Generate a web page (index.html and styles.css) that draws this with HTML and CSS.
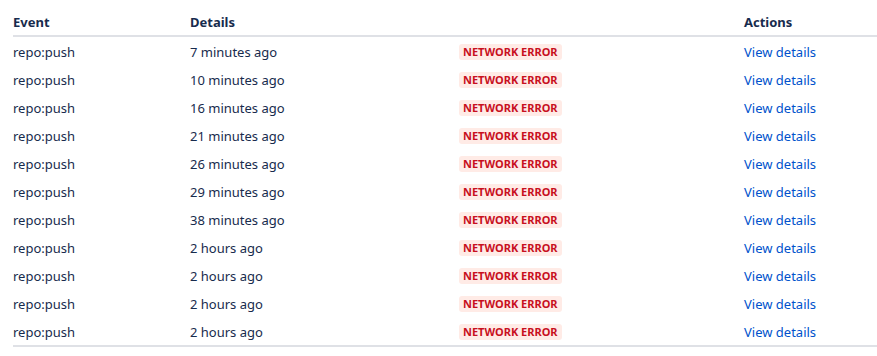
FILE: index.html
```html
<!DOCTYPE html>
<html>
<head>
    <title>Webhook requests</title>
    <link rel="stylesheet" href="styles.css">
</head>
<body>
    <table class="requests">
        <colgroup>
            <col class="col-event">
            <col class="col-details">
            <col class="col-status">
            <col class="col-actions">
        </colgroup>
        <thead>
            <tr>
                <th>Event</th>
                <th>Details</th>
                <th></th>
                <th>Actions</th>
            </tr>
        </thead>
        <tbody>
            <tr><td>repo:push</td><td>7 minutes ago</td><td><span class="lozenge">Network error</span></td><td><a href="#">View details</a></td></tr>
            <tr><td>repo:push</td><td>10 minutes ago</td><td><span class="lozenge">Network error</span></td><td><a href="#">View details</a></td></tr>
            <tr><td>repo:push</td><td>16 minutes ago</td><td><span class="lozenge">Network error</span></td><td><a href="#">View details</a></td></tr>
            <tr><td>repo:push</td><td>21 minutes ago</td><td><span class="lozenge">Network error</span></td><td><a href="#">View details</a></td></tr>
            <tr><td>repo:push</td><td>26 minutes ago</td><td><span class="lozenge">Network error</span></td><td><a href="#">View details</a></td></tr>
            <tr><td>repo:push</td><td>29 minutes ago</td><td><span class="lozenge">Network error</span></td><td><a href="#">View details</a></td></tr>
            <tr><td>repo:push</td><td>38 minutes ago</td><td><span class="lozenge">Network error</span></td><td><a href="#">View details</a></td></tr>
            <tr><td>repo:push</td><td>2 hours ago</td><td><span class="lozenge">Network error</span></td><td><a href="#">View details</a></td></tr>
            <tr><td>repo:push</td><td>2 hours ago</td><td><span class="lozenge">Network error</span></td><td><a href="#">View details</a></td></tr>
            <tr><td>repo:push</td><td>2 hours ago</td><td><span class="lozenge">Network error</span></td><td><a href="#">View details</a></td></tr>
            <tr><td>repo:push</td><td>2 hours ago</td><td><span class="lozenge">Network error</span></td><td><a href="#">View details</a></td></tr>
        </tbody>
    </table>
</body>
</html>
```

FILE: styles.css
```css
body {
    font-family: "Noto Sans", "Liberation Sans", sans-serif;
    font-size: 13px;
    color: #172b4d;
    margin: 0;
    padding: 0 0 0 13px;
}
.requests {
    width: 864px;
    border-collapse: collapse;
    table-layout: fixed;
    border-bottom: 2px solid #dfe1e6;
}
.col-event { width: 177px; }
.col-details { width: 269px; }
.col-status { width: 285px; }
.col-actions { width: 133px; }
.requests th {
    text-align: left;
    font-weight: 700;
    line-height: 20px;
    padding: 12px 0 3px;
    border-bottom: 2px solid #dfe1e6;
}
.requests td {
    padding: 5px 0 3px;
    line-height: 20px;
    white-space: nowrap;
}
.requests a {
    color: #0052cc;
    text-decoration: none;
}
.lozenge {
    display: inline-block;
    background-color: #ffebe6;
    color: #c8101e;
    font-size: 11px;
    font-weight: 700;
    line-height: 16px;
    padding: 0 4px;
    border-radius: 3px;
    text-transform: uppercase;
    vertical-align: 1px;
}
```
